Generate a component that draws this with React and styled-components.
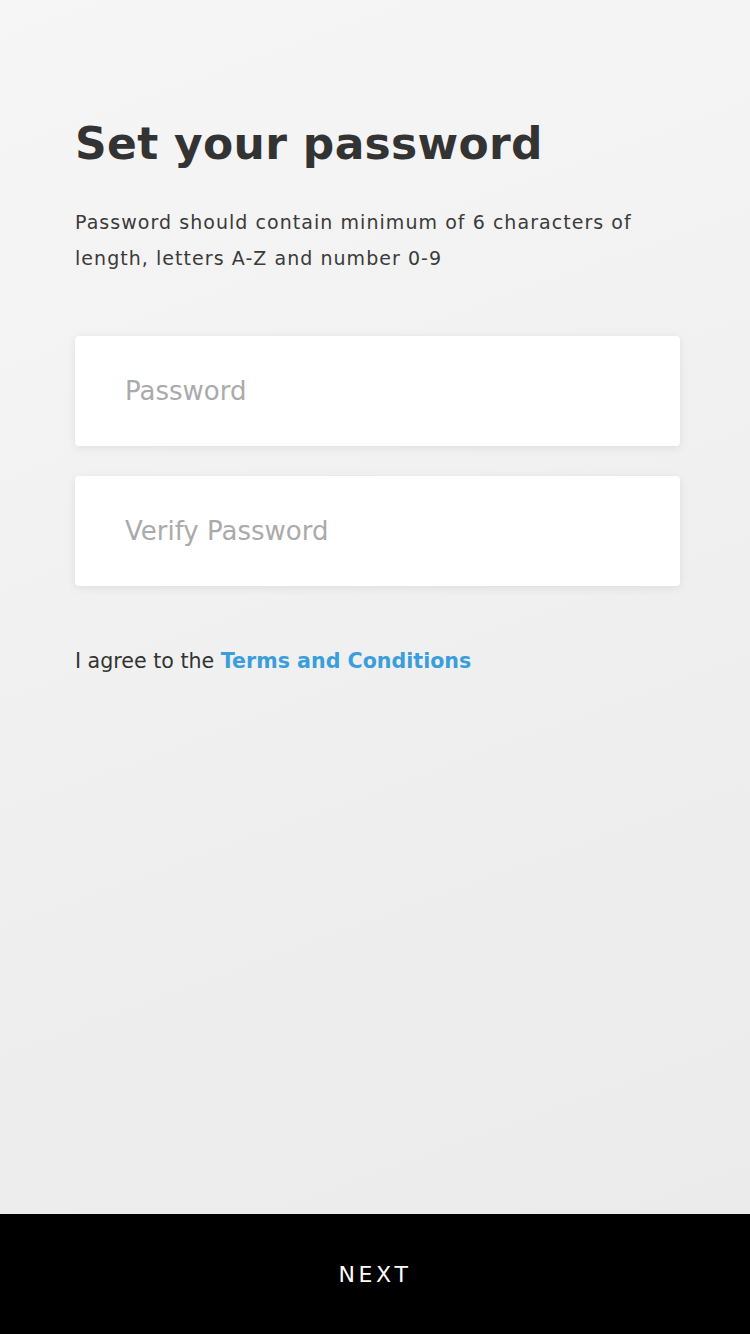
import React from "react";
import styled, { createGlobalStyle } from "styled-components";

const GlobalStyle = createGlobalStyle`
  html, body {
    margin: 0;
    padding: 0;
  }
  body {
    font-family: "DejaVu Sans", "Open Sans", sans-serif;
  }
`;

const Screen = styled.div`
  width: 750px;
  height: 1334px;
  display: flex;
  flex-direction: column;
  background: linear-gradient(160deg, #f6f6f6 0%, #efefef 55%, #eaeaea 100%);
`;

const Content = styled.main`
  flex: 1;
  padding: 112px 70px 0 75px;
`;

const Title = styled.h1`
  margin: 0 0 28px;
  font-size: 44px;
  font-weight: 700;
  color: #333;
  letter-spacing: 0.3px;
  line-height: 64px;
`;

const Hint = styled.p`
  margin: 0 0 60px;
  font-size: 19px;
  line-height: 36px;
  color: #3a3a3a;
  letter-spacing: 1.05px;
`;

const Fields = styled.div`
  display: flex;
  flex-direction: column;
  gap: 30px;
  width: 605px;
`;

const Field = styled.input`
  box-sizing: border-box;
  height: 110px;
  width: 100%;
  border: none;
  border-radius: 4px;
  background: #fff;
  box-shadow: 0 2px 10px rgba(0, 0, 0, 0.08);
  padding: 0 50px;
  font-family: inherit;
  font-size: 26px;
  color: #333;
  outline: none;

  &::placeholder {
    color: #aaaaaa;
  }
`;

const Agree = styled.p`
  margin: 63px 0 0;
  font-size: 20.6px;
  color: #333;
`;

const Link = styled.a`
  color: #3a9edb;
  font-weight: 700;
  text-decoration: none;
`;

const NextButton = styled.button`
  height: 120px;
  width: 100%;
  border: none;
  background: #000;
  color: #fff;
  font-family: inherit;
  font-size: 22px;
  letter-spacing: 3.6px;
  cursor: pointer;
`;

const App = () => {
  return (
    <Screen>
      <GlobalStyle />
      <Content>
        <Title>Set your password</Title>
        <Hint>
          Password should contain minimum of 6 characters of length, letters A-Z and number 0-9
        </Hint>
        <Fields>
          <Field type="password" placeholder="Password" />
          <Field type="password" placeholder="Verify Password" />
        </Fields>
        <Agree>
          I agree to the <Link href="#">Terms and Conditions</Link>
        </Agree>
      </Content>
      <NextButton>NEXT</NextButton>
    </Screen>
  );
};

export default App;
